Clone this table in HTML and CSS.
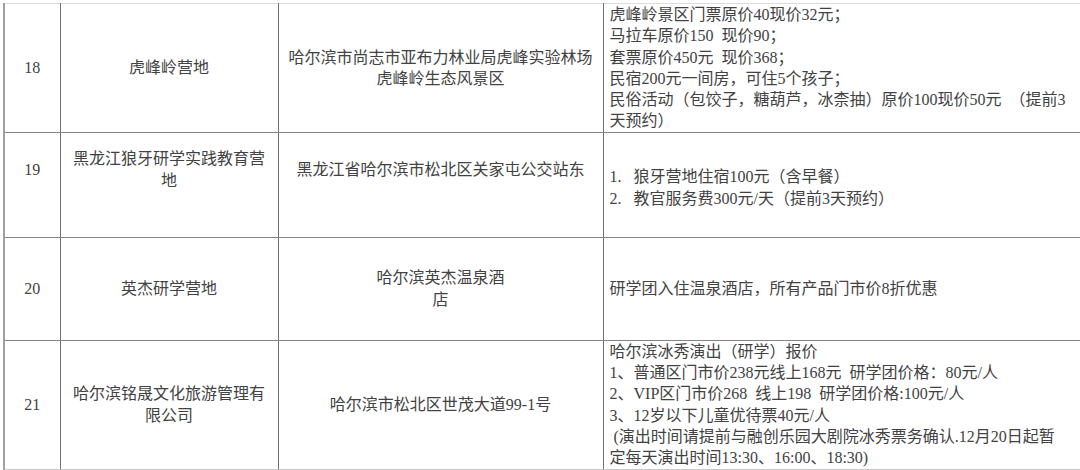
FILE: index.html
```html
<!DOCTYPE html>
<html lang="zh-CN">
<head>
<meta charset="utf-8">
<link rel="stylesheet" href="styles.css">
</head>
<body>
<table class="sheet">
  <colgroup>
    <col class="c-num">
    <col class="c-name">
    <col class="c-addr">
    <col class="c-price">
  </colgroup>
  <tr class="r18">
    <td class="num">18</td>
    <td class="name">虎峰岭营地</td>
    <td class="addr">哈尔滨市尚志市亚布力林业局虎峰实验林场<br>虎峰岭生态风景区</td>
    <td class="price">虎峰岭景区门票原价40现价32元；<br>马拉车原价150&nbsp; 现价90；<br>套票原价450元&nbsp; 现价368；<br>民宿200元一间房，可住5个孩子；<br>民俗活动（包饺子，糖葫芦，冰柰抽）原价100现价50元 &nbsp;（提前3<br>天预约）</td>
  </tr>
  <tr class="r19">
    <td class="num lift">19</td>
    <td class="name lift">黑龙江狼牙研学实践教育营<br>地</td>
    <td class="addr lift">黑龙江省哈尔滨市松北区关家屯公交站东</td>
    <td class="price drop"><span class="li">1.</span>狼牙营地住宿100元（含早餐）<br><span class="li">2.</span>教官服务费300元/天（提前3天预约）</td>
  </tr>
  <tr class="r20">
    <td class="num">20</td>
    <td class="name">英杰研学营地</td>
    <td class="addr">哈尔滨英杰温泉酒<br>店</td>
    <td class="price">研学团入住温泉酒店，所有产品门市价8折优惠</td>
  </tr>
  <tr class="r21">
    <td class="num">21</td>
    <td class="name">哈尔滨铭晟文化旅游管理有<br>限公司</td>
    <td class="addr">哈尔滨市松北区世茂大道99-1号</td>
    <td class="price">哈尔滨冰秀演出（研学）报价<br>1、普通区门市价238元线上168元&nbsp; 研学团价格：80元/人<br>2、VIP区门市价268&nbsp; 线上198&nbsp; 研学团价格:100元/人<br>3、12岁以下儿童优待票40元/人<br>&nbsp;(演出时间请提前与融创乐园大剧院冰秀票务确认.12月20日起暂<br>定每天演出时间13:30、16:00、18:30)</td>
  </tr>
</table>
</body>
</html>
```

FILE: styles.css
```css
html, body {
  margin: 0;
  padding: 0;
  background: #ffffff;
  overflow: hidden;
}

body {
  width: 1080px;
  height: 470px;
}

.sheet {
  margin: 3px 0 0 3px;
  border-collapse: collapse;
  table-layout: fixed;
  width: 1092px;
  font-family: "Liberation Serif", "Noto Sans CJK SC", serif;
  font-size: 16px;
  color: #424242;
  border-top: 1px solid #dcdcdc;
  border-left: 2px solid #a0a0a0;
  border-bottom: 1px solid #c8c8c8;
}

.c-num { width: 56px; }
.c-name { width: 218px; }
.c-addr { width: 325px; }
.c-price { width: 493px; }

.sheet td {
  padding: 0;
  border-right: 1px solid #707070;
  border-bottom: 1px solid #858585;
  vertical-align: middle;
  line-height: 21.3px;
  white-space: nowrap;
}

.r21 td {
  border-bottom: 1px solid #c8c8c8;
}

.r18 { height: 128px; }
.r19 { height: 105px; }
.r20 { height: 103px; }
.r21 { height: 127px; }

.num,
.name,
.addr {
  text-align: center;
}

.price {
  text-align: left;
  padding-left: 6px !important;
}

.lift {
  padding-bottom: 30px !important;
}

.drop {
  padding-top: 6px !important;
}

.li {
  display: inline-block;
  width: 24px;
}
```
